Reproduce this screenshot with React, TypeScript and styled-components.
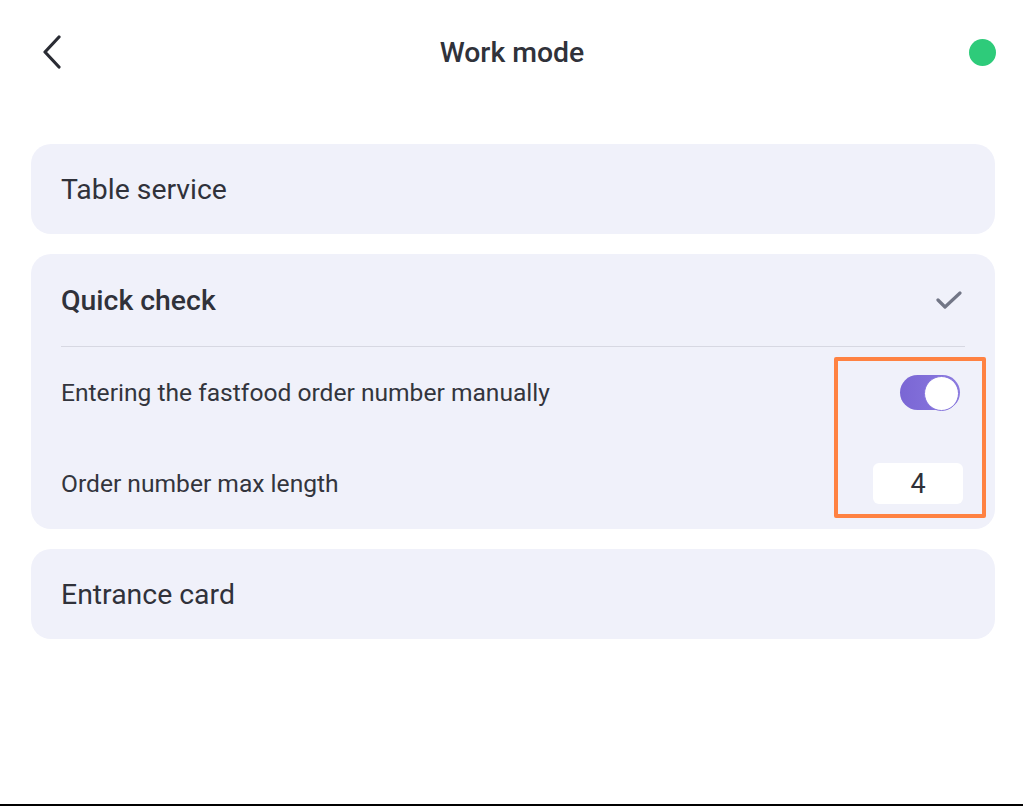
import React from "react";
import styled, { createGlobalStyle } from "styled-components";

const Global = createGlobalStyle`
  html, body { margin: 0; padding: 0; background: #ffffff; }
  body { font-family: Roboto, "Noto Sans", "Liberation Sans", sans-serif; color: #2f3139; }
  * { box-sizing: border-box; }
`;

const Page = styled.div`
  width: 1023px;
  height: 806px;
  border-bottom: 2px solid #000;
  display: flex;
  flex-direction: column;
  background: #fff;
`;

const Header = styled.header`
  height: 104px;
  display: grid;
  grid-template-columns: 1fr auto 1fr;
  align-items: center;
  padding: 0 27px 0 36px;
`;

const BackButton = styled.button`
  justify-self: start;
  width: 32px;
  height: 40px;
  border: 0;
  background: none;
  padding: 0;
  display: flex;
  align-items: center;
  justify-content: center;
  color: #2a2c34;
  cursor: pointer;
`;

const Title = styled.h1`
  margin: 0 0 0 -8px;
  font-size: 28.4px;
  font-weight: 500;
  color: #30323a;
`;

const StatusDot = styled.span`
  justify-self: end;
  width: 27px;
  height: 27px;
  border-radius: 50%;
  background: #2ecb7a;
`;

const List = styled.div`
  display: flex;
  flex-direction: column;
  gap: 20px;
  padding: 40px 28px 0 31px;
`;

const Card = styled.section`
  position: relative;
  background: #f0f1fa;
  border-radius: 20px;
`;

const CardHead = styled.div<{ $height: number }>`
  height: ${(p) => p.$height}px;
  display: flex;
  align-items: center;
  justify-content: space-between;
  padding: 0 33px 0 30px;
`;

const CardTitle = styled.span<{ $bold?: boolean }>`
  font-size: 28.4px;
  font-weight: ${(p) => (p.$bold ? 500 : 400)};
  color: #30323a;
`;

const Divider = styled.hr`
  margin: 0 30px;
  border: 0;
  height: 1px;
  background: #d7d8e2;
`;

const Row = styled.div`
  height: 91px;
  display: flex;
  align-items: center;
  justify-content: space-between;
  padding: 0 32px 0 30px;
`;

const RowLabel = styled.span`
  font-size: 24.6px;
  color: #33353d;
`;

const Toggle = styled.span<{ $on: boolean }>`
  position: relative;
  width: 60px;
  height: 35px;
  margin-right: 3px;
  border-radius: 18px;
  background: ${(p) => (p.$on ? "linear-gradient(90deg, #7a66d4, #8b7ae0)" : "#c9cad6")};
  &::after {
    content: "";
    position: absolute;
    top: 1px;
    ${(p) => (p.$on ? "right: 1px;" : "left: 1px;")}
    width: 33px;
    height: 33px;
    border-radius: 50%;
    background: #fff;
    border: 1.5px solid #8675dc;
  }
`;

const NumberBox = styled.div`
  width: 90px;
  height: 41px;
  background: #fff;
  border-radius: 6px;
  display: flex;
  align-items: center;
  justify-content: center;
  font-size: 27px;
  color: #2f3139;
`;

const Highlight = styled.div`
  position: absolute;
  left: 803px;
  top: 103px;
  width: 152px;
  height: 161px;
  border: 4px solid #ff8242;
  border-radius: 2px;
  pointer-events: none;
`;

export default function App() {
  return (
    <>
      <Global />
      <Page>
        <Header>
          <BackButton aria-label="Back">
            <svg width="24" height="34" viewBox="0 0 24 34" fill="none">
              <path d="M19 2 L5 17 L19 32" stroke="currentColor" strokeWidth="3.2" strokeLinecap="round" strokeLinejoin="round" />
            </svg>
          </BackButton>
          <Title>Work mode</Title>
          <StatusDot />
        </Header>
        <List>
          <Card>
            <CardHead $height={90}>
              <CardTitle>Table service</CardTitle>
            </CardHead>
          </Card>
          <Card>
            <CardHead $height={92}>
              <CardTitle $bold>Quick check</CardTitle>
              <svg width="26" height="20" viewBox="0 0 26 20" fill="none">
                <path d="M2 10 L9 17 L24 3" stroke="#727686" strokeWidth="3.2" strokeLinecap="round" strokeLinejoin="round" />
              </svg>
            </CardHead>
            <Divider />
            <Row>
              <RowLabel>Entering the fastfood order number manually</RowLabel>
              <Toggle $on />
            </Row>
            <Row>
              <RowLabel>Order number max length</RowLabel>
              <NumberBox>4</NumberBox>
            </Row>
            <Highlight />
          </Card>
          <Card>
            <CardHead $height={90}>
              <CardTitle>Entrance card</CardTitle>
            </CardHead>
          </Card>
        </List>
      </Page>
    </>
  );
}
